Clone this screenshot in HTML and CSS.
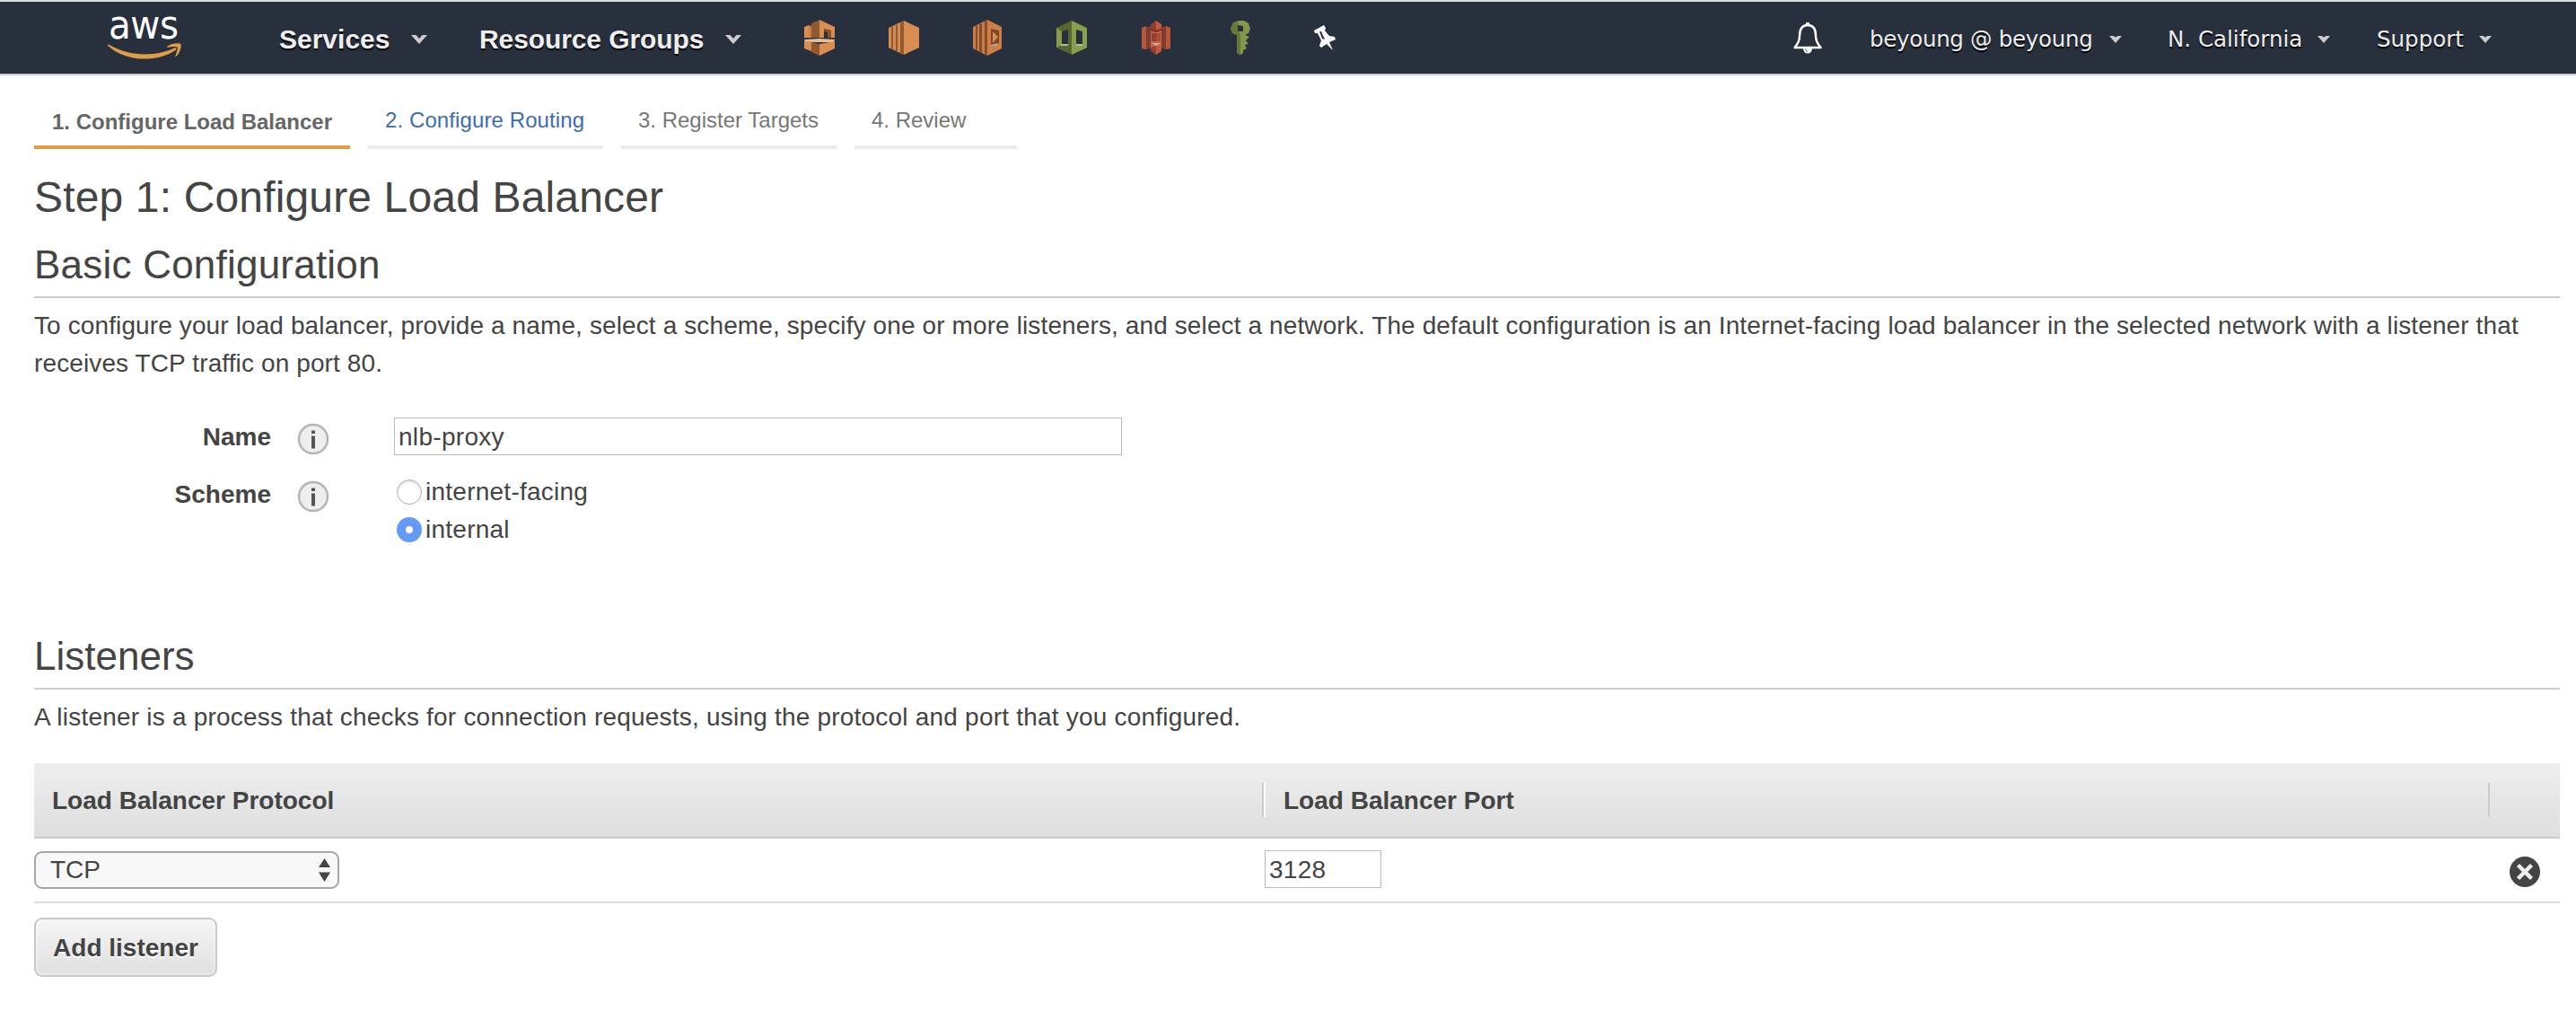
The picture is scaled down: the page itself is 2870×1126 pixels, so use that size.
FILE: index.html
```html
<!DOCTYPE html>
<html lang="en">
<head>
<meta charset="utf-8">
<title>Configure Load Balancer</title>
<link rel="stylesheet" href="styles.css">
</head>
<body>
<header class="nav">
  <div class="logo">
    <span class="logo-text">aws</span>
    <svg class="logo-smile" width="82" height="19" viewBox="0 0 82 19"><path d="M1 1.500C23 14.500 52 16 74 5.500 76 4.500 77.500 6.500 75.500 8 54 22 20 21 .3 3 -.4 2 .2 1 1 1.500Z" fill="#de9d46"/><path d="M66 3.800C71 -.3 80.500 -.4 81.500 1.200 82.700 3.500 80 11.500 76.500 14.800 75.800 15.500 75 15 75.400 14.100 76.500 11.200 78.500 5.800 77.500 4.700 76.500 3.400 70.500 4.200 67 4.700 65.900 4.800 65.400 4.300 66 3.800Z" fill="#de9d46"/></svg>
  </div>
  <div class="menu menu-services"><span>Services</span><svg width="18" height="10" viewBox="0 0 18 10"><path d="M0 0H5.500L9 4 12.500 0H18L9 10Z" fill="#ccc"/></svg></div>
  <div class="menu menu-groups"><span>Resource Groups</span><svg width="18" height="10" viewBox="0 0 18 10"><path d="M0 0H5.500L9 4 12.500 0H18L9 10Z" fill="#ccc"/></svg></div>
  <div class="shortcuts">
    <svg width="34" height="40" viewBox="0 0 34 40"><path d="M0 8 5 6V20H0Z" fill="#d98f52"/><path d="M5 6 8 7V20H5Z" fill="#c98048"/><path d="M8 4 17 0V20H8Z" fill="#8e5a34"/><path d="M17 0 34 8V20H30V12L22 10V20H17Z" fill="#d98d4f"/><path d="M22 10 30 12V20H26V14L22 13Z" fill="#8a4f2b"/><path d="M0 22 17 21 34 22 33 25H1Z" fill="#e7bd93"/><path d="M0 24H8V35L0 32Z" fill="#d98f52"/><path d="M8 25 17 27V40L8 36Z" fill="#8e5a34"/><path d="M17 27 34 24V32L17 40Z" fill="#d98d4f"/></svg>
    <svg width="34" height="38" viewBox="0 0 34 38"><path d="M0 8 17 0V38L0 30Z" fill="#d28a50"/><path d="M3 7 5 6V32L3 31ZM8 5 10 4V35L8 34ZM13 2 17 0V38L13 36Z" fill="#915a32"/><path d="M17 0 34 8V30L17 38Z" fill="#d98e51"/></svg>
    <svg width="32" height="40" viewBox="0 0 32 40"><path d="M0 8 16 0V40L0 32Z" fill="#c87d46"/><path d="M3 7 5 6V34L3 33ZM7 5 10 4V37L7 35ZM13 1 16 0V40L13 38Z" fill="#854d29"/><path d="M16 0 32 8V32L16 40Z" fill="#ca8048"/><path d="M20 10 29 12V27L20 30Z" fill="#7d4526"/><path d="M22 13 28 19 22 26Z" fill="#d98e51"/><path d="M20 28 28 26V28L20 30Z" fill="#bcaa99"/></svg>
    <svg width="34" height="38" viewBox="0 0 34 38"><path fill-rule="evenodd" d="M0 8 17 0V38L0 30ZM6 12V27H13V10Z" fill="#58662f"/><path d="M0 8 6 12V27L0 30Z" fill="#889b4b"/><path d="M5 26H13V28H5Z" fill="#b5bda0"/><path fill-rule="evenodd" d="M17 0 34 8V30L17 38ZM22 10V27H29V12Z" fill="#8a9f4d"/><path d="M22 26H29V28H22Z" fill="#b5bda0"/></svg>
    <svg width="32" height="38" viewBox="0 0 32 38"><path d="M0 8 5 6V32L0 31ZM27 6 32 8V31L27 32Z" fill="#b65840"/><path d="M5 7H10V31L5 32ZM22 7 27 6V32L22 31Z" fill="#813d2c"/><path d="M10 8H22V31H10Z" fill="#c5644a"/><path d="M10 4 16 0V12L10 9ZM11 14H16V23H11ZM16 28 10 30V34L16 38Z" fill="#8e412f"/><path d="M16 0 22 4V9L16 12ZM16 28 22 30V34L16 38Z" fill="#bf5a41"/><path d="M10 9 16 11 22 9V11L16 13 10 11Z" fill="#6e2d20"/><path d="M16 14H21V23H16Z" fill="#a84b37"/><path d="M11 25H21L16 28Z" fill="#d7aaa0"/></svg>
    <svg width="22" height="38" viewBox="0 0 22 38"><path fill-rule="evenodd" d="M3 2 9 0H15L20 3 22 9 20 14 16 16 21 18 17 22 20 26 16 27 18 31 14 33V36L11 38 7 36V16L2 14 0 9ZM8 5V12H14V6Z" fill="#84974a"/><path d="M3 2 9 0 8 5V12L11 14V38L7 36V16L2 14 0 9Z" fill="#68783a"/></svg>
    <svg width="24" height="28" viewBox="0 0 24 28"><path fill-rule="evenodd" d="M0 6 11 0 13 3 12 6 17 12 23 13 24 16 17 19 21 28 14 21 8 25 6 23 8 17 4 9 1 9ZM6 7 9 15 12 16 8 7Z" fill="#fff"/></svg>
  </div>
  <svg class="bell" width="32" height="35" viewBox="0 0 32 35"><path d="M16 3C9 3 7 8 7 15 7 21 5 24 1.500 28H30.500C27 24 25 21 25 15 25 8 23 3 16 3Z" fill="none" stroke="#fff" stroke-width="2.400" stroke-linejoin="round"/><path d="M14 0H18V4H14ZM11 29H21A5 5.500 0 0 1 11 29Z" fill="#fff"/><path d="M13 29.500 15.500 33" stroke="#555c68" stroke-width="1"/></svg>
  <div class="menu account menu-user"><span>beyoung @ beyoung</span><svg width="14" height="8" viewBox="0 0 14 8"><path d="M0 0H4.500L7 1.500 9.500 0H14L7 8Z" fill="#ccc"/></svg></div>
  <div class="menu account menu-region"><span>N. California</span><svg width="14" height="8" viewBox="0 0 14 8"><path d="M0 0H4.500L7 1.500 9.500 0H14L7 8Z" fill="#ccc"/></svg></div>
  <div class="menu account menu-support"><span>Support</span><svg width="14" height="8" viewBox="0 0 14 8"><path d="M0 0H4.500L7 1.500 9.500 0H14L7 8Z" fill="#ccc"/></svg></div>
</header>

<main class="page">
  <nav class="steps">
    <div class="step step-current">1. Configure Load Balancer</div>
    <div class="step step-link">2. Configure Routing</div>
    <div class="step step-targets">3. Register Targets</div>
    <div class="step step-review">4. Review</div>
  </nav>

  <h1 class="title">Step 1: Configure Load Balancer</h1>

  <section class="basic">
    <h2 class="heading">Basic Configuration</h2>
    <p class="text">To configure your load balancer, provide a name, select a scheme, specify one or more listeners, and select a network. The default configuration is an Internet-facing load balancer in the selected network with a listener that<br>receives TCP traffic on port 80.</p>
    <div class="field field-name">
      <label class="label">Name</label>
      <svg class="info" width="36" height="36" viewBox="0 0 36 36"><circle cx="18" cy="18" r="16" fill="#eee" stroke="#b5b5b5" stroke-width="2.500"/><path d="M16 8.500H20V12H16ZM16 14.500H20V28.500H16Z" fill="#555"/></svg>
      <div class="input input-name">nlb-proxy</div>
    </div>
    <div class="field field-scheme">
      <label class="label">Scheme</label>
      <svg class="info" width="36" height="36" viewBox="0 0 36 36"><circle cx="18" cy="18" r="16" fill="#eee" stroke="#b5b5b5" stroke-width="2.500"/><path d="M16 8.500H20V12H16ZM16 14.500H20V28.500H16Z" fill="#555"/></svg>
      <div class="radios">
        <div class="radio"><i class="dot"></i><span>internet-facing</span></div>
        <div class="radio"><i class="dot dot-on"></i><span>internal</span></div>
      </div>
    </div>
  </section>

  <section class="listeners">
    <h2 class="heading">Listeners</h2>
    <p class="text text-listener">A listener is a process that checks for connection requests, using the protocol and port that you configured.</p>
    <div class="table">
      <div class="row head">
        <div class="cell"><span>Load Balancer Protocol</span></div>
        <div class="cell cell-port"><i class="sep sep-light"></i><span>Load Balancer Port</span></div>
        <div class="cell"><i class="sep"></i></div>
      </div>
      <div class="row body">
        <div class="cell"><div class="select"><span>TCP</span><svg width="13" height="26" viewBox="0 0 13 26"><path d="M6.500 0 13 10H0ZM0 15.500H13L6.500 26Z" fill="#444"/></svg></div></div>
        <div class="cell"><div class="input input-port">3128</div></div>
        <div class="cell cell-remove"><svg width="36" height="36" viewBox="0 0 36 36"><circle cx="18" cy="18" r="17" fill="#444"/><path d="M10.500 10.500 25.500 25.500M25.500 10.500 10.500 25.500" stroke="#eee" stroke-width="4.500"/></svg></div>
      </div>
    </div>
    <button class="add">Add listener</button>
  </section>
</main>
</body>
</html>
```
FILE: styles.css
```css
* { box-sizing: border-box; }

body {
  margin: 0;
  background: #fff;
  color: #444;
  font-family: "Liberation Sans", Arial, sans-serif;
  font-size: 28px;
  line-height: 42px;
}

svg { display: block; flex: none; }
h1, h2, p { margin: 0; font-weight: 400; }

/* top bar */
.nav {
  display: flex;
  align-items: center;
  height: 84px;
  border-top: 2px solid #ddd;
  border-bottom: 2px solid #ccc;
  background: #282f3d;
  color: #eee;
}
.logo {
  width: 82px;
  height: 80px;
  margin-left: 120px;
  padding-top: 10px;
}
.logo-text {
  display: block;
  height: 36px;
  padding-left: 1px;
  color: #fff;
  font-family: "DejaVu Sans Condensed", "DejaVu Sans", sans-serif;
  font-stretch: condensed;
  font-size: 45px;
  letter-spacing: -0.5px;
  line-height: 31px;
}
.menu {
  display: flex;
  align-items: center;
  justify-content: space-between;
  padding-top: 3px;
  font-size: 30px;
  font-weight: 700;
  line-height: 40px;
  text-shadow: 0 2px 1px #000;
  white-space: nowrap;
}
.menu-services { width: 165px; margin-left: 109px; }
.menu-groups { width: 292px; margin-left: 58px; letter-spacing: -0.1px; }
.account {
  font-family: "DejaVu Sans", Verdana, sans-serif;
  font-size: 24.5px;
  font-weight: 400;
}
.menu-user { width: 281px; margin-left: 53px; letter-spacing: -0.3px; }
.menu-region { width: 181px; margin-left: 51px; }
.menu-support { width: 128px; margin-left: 52px; }
.shortcuts {
  display: grid;
  grid-template-columns: repeat(7, 93.8px);
  justify-items: center;
  align-items: center;
  width: 657px;
  margin-left: 40px;
}
.bell { margin-left: 475px; }

/* wizard steps */
.page { padding: 0 18px 0 38px; }
.steps { display: flex; gap: 20px; height: 82px; }
.step {
  height: 82px;
  padding: 30px 19px 0;
  border-bottom: 4px solid #ebebeb;
  color: #777;
  font-size: 24px;
  line-height: 40px;
  white-space: nowrap;
}
.step-current {
  width: 352px;
  padding: 32px 0 0 20px;
  border-color: #e09d46;
  color: #666;
  font-weight: 700;
}
.step-link { width: 262px; color: #3b6cb5; letter-spacing: 0.1px; }
.step-targets { width: 240px; }
.step-review { width: 181px; }

.title {
  height: 92px;
  padding-top: 24px;
  font-size: 48px;
  letter-spacing: 0.15px;
  line-height: 60px;
}
.heading {
  height: 74px;
  padding-top: 7px;
  border-bottom: 2px solid #ccc;
  font-size: 44px;
  letter-spacing: 0.22px;
  line-height: 60px;
}
.listeners .heading { letter-spacing: 0; }
.text {
  padding-top: 10px;
  letter-spacing: 0.115px;
  white-space: nowrap;
}
.text-listener { letter-spacing: 0.21px; }

/* form */
.field { display: flex; }
.field-name { margin-top: 39px; height: 62px; }
.label {
  width: 264px;
  padding-top: 1px;
  font-weight: 700;
  text-align: right;
}
.info { margin: 6px 72px 0 29px; }
.field-scheme .label { padding-top: 3px; }
.field-scheme .info { margin-top: 8px; }
.input {
  height: 42px;
  padding-left: 4px;
  border: 1px solid #bbb;
  letter-spacing: 0.3px;
  line-height: 41px;
}
.input-name { width: 811px; }
.radio { display: flex; align-items: center; }
.radio span { padding-left: 4px; letter-spacing: 0.25px; }
.dot {
  width: 28px;
  height: 28px;
  margin-left: 3px;
  border: 1px solid #b0b0b0;
  border-radius: 50%;
  box-shadow: inset 0 2px 2px #ddd;
}
.dot-on {
  border: 10px solid #669bf5;
  box-shadow: none;
}

/* listeners */
.listeners { margin-top: 83px; }
.table { margin-top: 30px; }
.row {
  display: grid;
  grid-template-columns: 1368px 1366px 80px;
}
.head {
  height: 84px;
  align-items: center;
  border-bottom: 2px solid #ccc;
  background: linear-gradient(#eee, #dedede);
  font-weight: 700;
}
.head .cell { display: flex; align-items: center; padding-left: 20px; }
.head .cell-port, .head .cell:last-child { padding-left: 0; }
.head span { padding-top: 2px; }
.sep { width: 2px; height: 38px; background: #ccc; }
.sep-light { width: 4px; margin-right: 20px; border-right: 2px solid #fff; }
.body {
  height: 72px;
  align-items: center;
  border-bottom: 2px solid #ddd;
}
.select {
  display: flex;
  align-items: center;
  justify-content: space-between;
  width: 340px;
  height: 42px;
  padding: 0 8px 0 16px;
  border: 2px solid #a6a6a6;
  border-radius: 9px;
  background: #f8f8f8;
}
.input-port { width: 130px; margin: 0 0 2px 3px; }
.cell-remove { padding: 4px 0 0 23px; }
.add {
  display: block;
  width: 204px;
  height: 66px;
  margin-top: 16px;
  padding: 2px 0 0;
  border: 2px solid #c8c8c8;
  border-radius: 9px;
  background: linear-gradient(#f6f6f6, #dfdfdf);
  box-shadow: inset 0 0 4px #fff;
  color: #444;
  font: 700 28px/40px "Liberation Sans", Arial, sans-serif;
  text-shadow: 0 2px 0 #fff;
}
```
